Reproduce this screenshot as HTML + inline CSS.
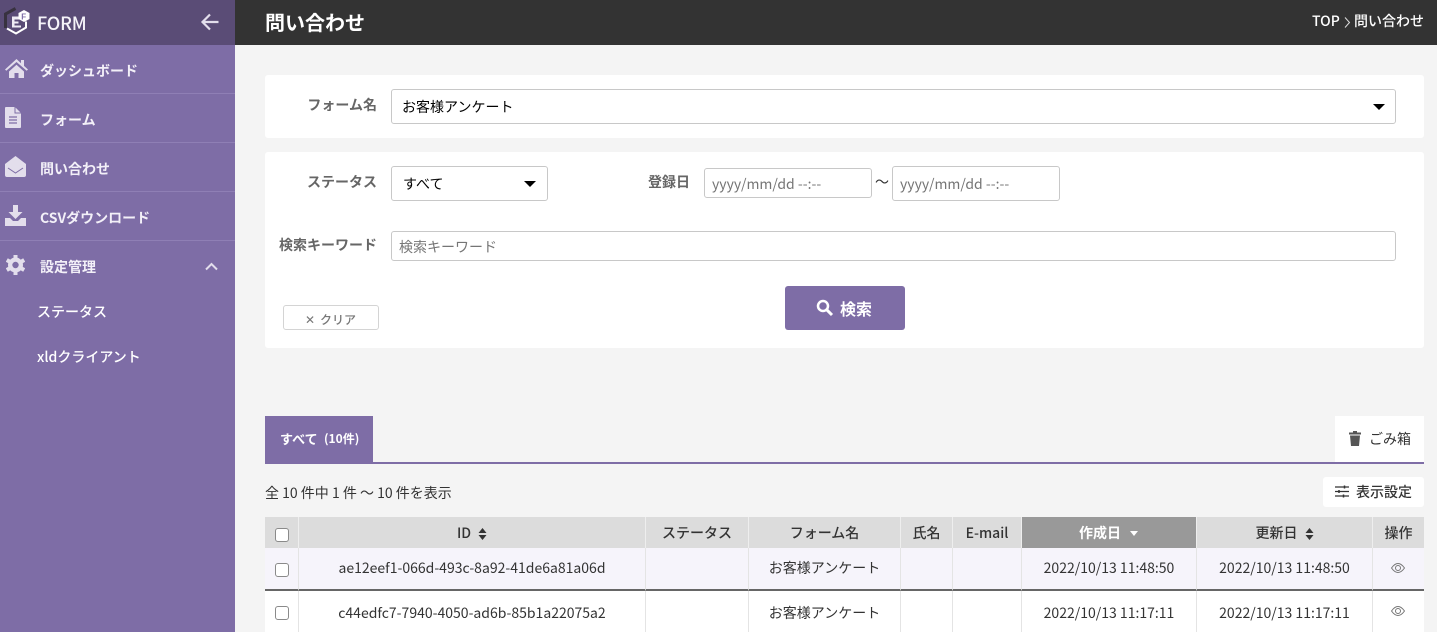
<!DOCTYPE html>
<html lang="ja"><head><meta charset="utf-8"><title>問い合わせ</title>
<style>
*{box-sizing:border-box}
html,body{margin:0;padding:0;width:1437px;height:632px;overflow:hidden}
body{background:#f4f4f4;font-family:"Noto Sans CJK JP","Liberation Sans",sans-serif;font-size:14px;color:#333}
#p{position:absolute;left:0;top:0;width:1437px;height:632px;overflow:hidden}
.a{position:absolute;white-space:nowrap}
.side{left:0;top:0;width:235px;height:632px;background:#7e6da6}
.logo{left:0;top:0;width:235px;height:45px;background:#5a4c76}
.hr{left:0;width:235px;height:1px;background:#8f7fb5}
.nav{left:40px;color:#f3f0f8;font-weight:700;font-size:14px;line-height:20px}
.sub{left:37px;color:#fff;font-size:14px;line-height:20px;font-weight:500}
.top{left:235px;top:0;width:1202px;height:45px;background:#333}
.panel{left:265px;width:1159px;background:#fff;border-radius:3px}
.lbl{color:#666;font-weight:700;font-size:14px;line-height:20px;text-align:right}
.in{background:#fff;border:1px solid #c8c8c8;border-radius:3px}
.ph{color:#757575;font-size:14px;line-height:20px}
.tri{width:0;height:0;border-left:6px solid transparent;border-right:6px solid transparent;border-top:6px solid #000}
table{position:absolute;left:265px;top:517px;width:1159px;border-collapse:separate;border-spacing:0;table-layout:fixed}
th{height:31px;background:#dcdcdc;font-size:14px;font-weight:500;color:#333;padding:0;text-align:center;border-left:1px solid #eee;line-height:20px}
td{padding:0;text-align:center;font-size:14px;color:#333;border-left:1px solid #e4e4e4;line-height:20px;background:#fff}
th:first-child,td:first-child{border-left:0}
.r1 td{height:43px;background:#f6f4fb;border-bottom:2px solid #666;padding-bottom:1px}
.r2 td{height:44px}
th.act{background:#999;color:#fff;font-weight:700}
.cb{display:inline-block;position:relative;left:0;width:14px;height:14px;border:1px solid #8a8a8a;border-radius:3px;background:#fff;vertical-align:middle}
.r1 .cb{top:1px}
th .cb{top:1px}
.r2 .cb{top:-1px}
.sort{display:inline-block;vertical-align:middle;margin-left:7px}
svg{display:block}
.eye{margin:auto;position:relative;left:-1px}
.r2 .eye{top:-2px}
</style></head>
<body>
<div id="p">
<div class="a side"></div>
<div class="a logo"></div>
<svg class="a" style="left:0;top:0" width="32" height="38" viewBox="0 0 32 38"><path d="M15.500 8.500 5.500 14v14" fill="none" stroke="#38323f" stroke-width="3"/><path d="M7 28.500l9 5 10-6v-6" fill="none" stroke="#fff" stroke-width="2"/><path d="M12 16.500h8v3h-5.500v2h4v2h-4v2H21v2h-9z" fill="#efecf4"/><path d="M24 10l5.500 3v6L24 22l-5.500-3v-6z" fill="#fff"/><text x="21.300" y="19.500" font-size="8" font-weight="700" fill="#7e6da6" font-family="Liberation Sans">F</text></svg>
<div class="a" style="left:37px;top:10px;color:#f5f3f9;font-size:18px;line-height:26px;font-weight:500;letter-spacing:-.2px">FORM</div>
<svg class="a" style="left:200px;top:12px" width="20" height="20" viewBox="0 0 20 20"><path d="M18.500 10H2.500M10 2.500 2.500 10l7.500 7.500" fill="none" stroke="#e3deec" stroke-width="2.200"/></svg>

<svg class="a" style="left:5px;top:59px" width="23" height="19" viewBox="0 0 23 19"><path d="M11.500 0 0 10.500l1.300 1.300L11.500 3l10.200 8.800 1.300-1.300-4-3.600V1h-3v3.300z M4 12.500V19h5.500v-5h4v5H19v-6.500l-7.500-6.800z" fill="#e3deec"/></svg>
<div class="a nav" style="top:61px">ダッシュボード</div>
<div class="a hr" style="top:93px"></div>
<svg class="a" style="left:5px;top:107px" width="16" height="21" viewBox="0 0 16 21"><path d="M1 0h9l6 6v14a1 1 0 0 1-1 1H1a1 1 0 0 1-1-1V1a1 1 0 0 1 1-1z" fill="#e3deec"/><path d="M10 0v6h6" fill="none" stroke="#7e6da6"/><path d="M4 10h8M4 13h8M4 16h8" stroke="#7e6da6" stroke-width="1.200"/></svg>
<div class="a nav" style="top:110px">フォーム</div>
<div class="a hr" style="top:142px"></div>
<svg class="a" style="left:5px;top:156px" width="21" height="21" viewBox="0 0 21 21"><path d="M10.500 0 21 8v11a2 2 0 0 1-2 2H2a2 2 0 0 1-2-2V8z" fill="#e3deec"/><path d="M3 12l7.500 5 7.500-5" fill="none" stroke="#7e6da6" stroke-width="1"/></svg>
<div class="a nav" style="top:159px">問い合わせ</div>
<div class="a hr" style="top:191px"></div>
<svg class="a" style="left:5px;top:205px" width="21" height="21" viewBox="0 0 21 21"><path d="M8 0h5v7h4.500L10.500 14 3.500 7H8z M0 13h5l3 3h5l3-3h5v8H0z" fill="#e3deec"/></svg>
<div class="a nav" style="top:208px">CSVダウンロード</div>
<div class="a hr" style="top:240px"></div>
<svg class="a" style="left:6px;top:255px" width="19" height="20" viewBox="0 0 19 20"><path d="M9.500 2.500a7 7 0 1 0 0 15 7 7 0 0 0 0-15zm0 4.300a3.200 3.200 0 1 1 0 6.400 3.200 3.200 0 0 1 0-6.400z" fill="#e3deec"/><path d="M9.500 0v4M9.500 16v4M0.800 5l3.500 2M14.700 13l3.500 2M0.800 15l3.500-2M14.700 7l3.500-2" stroke="#e3deec" stroke-width="4"/></svg>
<div class="a nav" style="top:257px">設定管理</div>
<svg class="a" style="left:205px;top:262px" width="13" height="9" viewBox="0 0 13 9"><path d="M1 7.500 6.500 2l5.500 5.500" fill="none" stroke="#e3deec" stroke-width="2"/></svg>
<div class="a sub" style="top:302px">ステータス</div>
<div class="a sub" style="top:347px">xldクライアント</div>

<div class="a top"></div>
<div class="a" style="left:265px;top:8px;color:#fff;font-size:20px;line-height:28px;font-weight:700">問い合わせ</div>
<div class="a" style="left:1312px;top:11px;color:#fff;font-size:14px;line-height:20px;font-weight:500">TOP</div>
<svg class="a" style="left:1344px;top:17px" width="7" height="11" viewBox="0 0 7 11"><path d="M1 .5 5.500 5.500 1 10.500" fill="none" stroke="#ddd" stroke-width="1"/></svg>
<div class="a" style="left:1354px;top:11px;color:#fff;font-size:14px;line-height:20px;font-weight:500">問い合わせ</div>

<div class="a panel" style="top:75px;height:63px"></div>
<div class="a lbl" style="left:277px;width:100px;top:95px">フォーム名</div>
<div class="a in" style="left:391px;top:89px;width:1005px;height:35px"></div>
<div class="a" style="left:403px;top:97px;color:#000;line-height:20px;font-size:14px;margin-left:-1px">お客様アンケート</div>
<div class="a tri" style="left:1373px;top:104px"></div>

<div class="a panel" style="top:152px;height:196px"></div>
<div class="a lbl" style="left:277px;width:100px;top:172px">ステータス</div>
<div class="a in" style="left:391px;top:166px;width:157px;height:35px"></div>
<div class="a" style="left:403px;top:174px;color:#000;line-height:20px;font-size:14px">すべて</div>
<div class="a tri" style="left:524px;top:181px"></div>
<div class="a lbl" style="left:640px;width:50px;top:172px">登録日</div>
<div class="a in" style="left:704px;top:168px;width:168px;height:30px"></div>
<div class="a ph" style="left:712px;top:174px">yyyy/mm/dd --:--</div>
<div class="a" style="left:875px;top:172px;line-height:20px;font-size:14px">～</div>
<div class="a in" style="left:892px;top:166px;width:168px;height:35px"></div>
<div class="a ph" style="left:900px;top:174px">yyyy/mm/dd --:--</div>
<div class="a lbl" style="left:267px;width:110px;top:235px">検索キーワード</div>
<div class="a in" style="left:391px;top:231px;width:1005px;height:30px"></div>
<div class="a ph" style="left:399px;top:237px">検索キーワード</div>
<div class="a in" style="left:283px;top:305px;width:96px;height:25px;border-color:#d4d4d4"></div>
<div class="a" style="left:305px;top:310px;color:#777;font-size:12px;line-height:20px;font-weight:500">✕</div>
<div class="a" style="left:320px;top:310px;color:#777;font-size:12px;line-height:20px;font-weight:500">クリア</div>
<div class="a" style="left:785px;top:286px;width:120px;height:44px;background:#7e6da6;border-radius:3px"></div>
<svg class="a" style="left:816px;top:299px" width="18" height="18" viewBox="0 0 18 18"><circle cx="7" cy="7" r="5" fill="none" stroke="#fff" stroke-width="2.500"/><path d="M10.800 10.800 16 16" stroke="#fff" stroke-width="3"/></svg>
<div class="a" style="left:840px;top:297px;color:#fff;font-size:16px;line-height:22px;font-weight:700">検索</div>

<div class="a" style="left:265px;top:416px;width:108px;height:46px;background:#7e6da6"></div>
<div class="a" style="left:280px;top:429px;color:#fff;font-size:13px;line-height:20px;font-weight:700">すべて</div>
<div class="a" style="left:324px;top:429px;color:#fff;font-size:12px;line-height:20px;font-weight:700">(10件)</div>
<div class="a" style="left:1335px;top:416px;width:89px;height:46px;background:#fff"></div>
<svg class="a" style="left:1349px;top:431px" width="12" height="15" viewBox="0 0 12 15"><path d="M0 1.500h4V0h4v1.500h4V3.500H0z M1 4.500h10L10 15H2z" fill="#555"/></svg>
<div class="a" style="left:1369px;top:429px;font-size:14px;line-height:20px">ごみ箱</div>
<div class="a" style="left:265px;top:462px;width:1159px;height:2px;background:#7e6da6"></div>

<div class="a" style="left:265px;top:483px;font-size:14px;line-height:20px">全 10 件中 1 件 ～ 10 件を表示</div>
<div class="a" style="left:1323px;top:477px;width:101px;height:30px;background:#fff;border-radius:3px"></div>
<svg class="a" style="left:1335px;top:485px" width="14" height="13" viewBox="0 0 14 13"><path d="M0 2h14M0 6.500h14M0 11h14" stroke="#333" stroke-width="1.200"/><path d="M9.500 .5v3M4 5v3M8.500 9.500v3" stroke="#333" stroke-width="1.500"/></svg>
<div class="a" style="left:1356px;top:482px;font-size:14px;line-height:20px;font-weight:500">表示設定</div>

<table>
<colgroup><col style="width:33px"><col style="width:347px"><col style="width:103px"><col style="width:152px"><col style="width:52px"><col style="width:69px"><col style="width:175px"><col style="width:176px"><col style="width:52px"></colgroup>
<tr>
<th><span class="cb"></span></th>
<th>ID<span class="sort"><svg width="9" height="12" viewBox="0 0 9 12"><path d="M4.500 0 8.500 5H.5zM4.500 12 .5 7h8z" fill="#333"/></svg></span></th>
<th>ステータス</th><th>フォーム名</th><th>氏名</th><th>E-mail</th>
<th class="act">作成日<span class="sort" style="margin-left:8px"><svg width="10" height="6" viewBox="0 0 10 6"><path d="M1 0h8L5 5z" fill="#fff"/></svg></span></th>
<th>更新日<span class="sort"><svg width="9" height="12" viewBox="0 0 9 12"><path d="M4.500 0 8.500 5H.5zM4.500 12 .5 7h8z" fill="#333"/></svg></span></th>
<th>操作</th>
</tr>
<tr class="r1">
<td><span class="cb"></span></td><td>ae12eef1-066d-493c-8a92-41de6a81a06d</td><td></td><td>お客様アンケート</td><td></td><td></td><td>2022/10/13 11:48:50</td><td>2022/10/13 11:48:50</td>
<td><svg class="eye" width="14" height="10" viewBox="0 0 14 10"><path d="M.5 5C3 1.500 5 .5 7 .5s4 1 6.500 4.500C11 8.500 9 9.500 7 9.500S3 8.500.5 5z" fill="none" stroke="#777"/><circle cx="7" cy="5" r="2.500" fill="none" stroke="#777"/></svg></td>
</tr>
<tr class="r2">
<td><span class="cb"></span></td><td>c44edfc7-7940-4050-ad6b-85b1a22075a2</td><td></td><td>お客様アンケート</td><td></td><td></td><td>2022/10/13 11:17:11</td><td>2022/10/13 11:17:11</td>
<td><svg class="eye" width="14" height="10" viewBox="0 0 14 10"><path d="M.5 5C3 1.500 5 .5 7 .5s4 1 6.500 4.500C11 8.500 9 9.500 7 9.500S3 8.500.5 5z" fill="none" stroke="#777"/><circle cx="7" cy="5" r="2.500" fill="none" stroke="#777"/></svg></td>
</tr>
</table>
</div>
</body></html>
